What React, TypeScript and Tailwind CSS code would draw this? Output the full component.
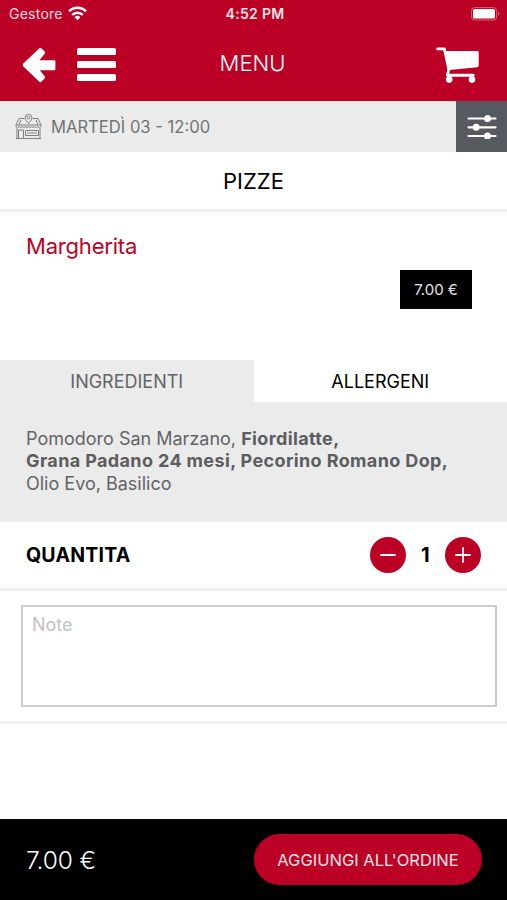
import { useState } from 'react'

function WifiIcon() {
  return (
    <svg width="19" height="15" viewBox="0 0 19 15" fill="none" stroke="#fff" strokeWidth="2.5">
      <path d="M1 5.4a12 12 0 0 1 17 0" />
      <path d="M4.2 8.9a7.5 7.5 0 0 1 10.6 0" />
      <path d="M9.5 14.2 6.6 11.2a4.1 4.1 0 0 1 5.8 0Z" fill="#fff" stroke="none" />
    </svg>
  )
}

function BatteryIcon() {
  return (
    <svg width="30" height="14" viewBox="0 0 30 14" fill="none">
      <rect x="0.6" y="0.6" width="25" height="12.4" rx="3" stroke="#dd6078" strokeWidth="1" />
      <rect x="2" y="2" width="22" height="9.6" rx="1.6" fill="#fff" />
      <path d="M27 4.6c1.9.7 1.9 3.7 0 4.4Z" fill="#dd6078" />
    </svg>
  )
}

function BackIcon() {
  return (
    <svg width="34" height="36" viewBox="0 0 34 36" fill="#fff" stroke="#fff" strokeWidth="2" strokeLinejoin="round">
      <path d="M18.3 1.7 2 17.2Q1.400 18 2 18.800L18.300 34.300 21.800 31V29.600L16.200 23V22.200H32.400V14.200H16.200V13L21.800 6.400V5Z" />
    </svg>
  )
}

function MenuIcon() {
  return (
    <svg width="39" height="33" viewBox="0 0 39 33" fill="#fff">
      <rect width="39" height="7" rx="1.6" />
      <rect y="13" width="39" height="7" rx="1.6" />
      <rect y="26" width="39" height="7" rx="1.6" />
    </svg>
  )
}

function CartIcon() {
  return (
    <svg width="43" height="36" viewBox="0 0 43 36" fill="none">
      <path d="M1.600 1.900h6.800l4.400 20.600-1.400 5.500" stroke="#fff" strokeWidth="2.800" strokeLinecap="round" strokeLinejoin="round" />
      <path d="M9.300 4h31.800q1.600 0 1.600 1.600v13q0 1.400-1.400 1.600L13.200 23.100Z" fill="#fff" />
      <path d="M11.800 28.300h25.400" stroke="#fff" strokeWidth="3" strokeLinecap="round" />
      <circle cx="13.200" cy="32.600" r="3.300" fill="#fff" />
      <circle cx="36" cy="32.600" r="3.300" fill="#fff" />
    </svg>
  )
}

function ShopIcon() {
  return (
    <svg width="27" height="27" viewBox="0 0 27 27" fill="none" stroke="#808080" strokeWidth="1">
      <path d="M9.5 5.500H4L1 12v1.600q1.500 2 3.200 0 1.500 2 3.100 0 1.600 2 3.100 0 1.600 2 3.100 0 1.600 2 3.100 0 1.600 2 3.100 0 1.600 2 3.100 0 1.600 2 3.200 0V12l-3-6.500h-5.500" />
      <path d="M1 12h25M2 15v10.500h23V15M1 25.500h25" />
      <path d="M3.500 25v-8h5v8M10.500 17.500h13v5h-13zM12 20h10M6 7l-2 5M21 7l2 5" />
      <path d="M13.500 10.500c-2-2.400-3.400-3.800-3.400-5.700a3.400 3.400 0 0 1 6.800 0c0 1.900-1.400 3.300-3.400 5.700Z" />
      <circle cx="13.500" cy="4.700" r="1.200" />
    </svg>
  )
}

function FilterIcon() {
  return (
    <svg width="30" height="24" viewBox="0 0 30 24" fill="#fff" stroke="#fff" strokeWidth="2.2" strokeLinecap="round">
      <path d="M1.500 3.500h27M1.500 12.300h27M1.500 21h27" />
      <circle cx="20.500" cy="3.500" r="2.400" />
      <circle cx="9.200" cy="12.300" r="2.400" />
      <circle cx="20.500" cy="21" r="2.400" />
    </svg>
  )
}

type RoundButtonProps = {
  label: string
  path: string
  onClick: () => void
}

function RoundButton({ label, path, onClick }: RoundButtonProps) {
  return (
    <button
      type="button"
      aria-label={label}
      onClick={onClick}
      className="flex size-9 items-center justify-center rounded-full bg-[#bc0025]"
    >
      <svg width="16" height="16" viewBox="0 0 16 16" stroke="#fff" strokeWidth="1.8" strokeLinecap="round">
        <path d={path} />
      </svg>
    </button>
  )
}

export default function App() {
  const [quantity, setQuantity] = useState(1)

  return (
    <div className="flex h-[900px] w-[507px] flex-col overflow-hidden bg-white font-['Inter',sans-serif] text-black">
      <header className="h-[101px] shrink-0 bg-[#bc0025] text-white">
        <div className="grid h-7 grid-cols-3 items-center pr-[6px] pl-[9px]">
          <div className="flex items-center gap-[5px] pb-[2px] text-[14px] tracking-[0.25px] text-white/85">
            Gestore
            <WifiIcon />
          </div>
          <div className="pb-[2px] text-center text-[14px] font-semibold tracking-[0.3px] text-white/90">4:52 PM</div>
          <div className="flex justify-end pb-px">
            <BatteryIcon />
          </div>
        </div>
        <div className="grid h-[73px] grid-cols-3 items-center pr-[28px] pl-[22px]">
          <div className="flex items-center gap-[21px]">
            <BackIcon />
            <MenuIcon />
          </div>
          <h1 className="pb-[2px] pl-1 text-center text-[22px] font-light">MENU</h1>
          <div className="flex justify-end">
            <CartIcon />
          </div>
        </div>
      </header>

      <div className="flex h-[51px] shrink-0 bg-[#ebebeb]">
        <div className="flex flex-1 items-center gap-[9px] pl-[15px] text-[16.6px] text-[#727272]">
          <ShopIcon />
          <span className="pt-[2px]">MARTEDÌ 03 - 12:00</span>
        </div>
        <button type="button" aria-label="Filtri" className="flex w-[51px] items-center justify-center bg-[#575960]">
          <FilterIcon />
        </button>
      </div>

      <h2 className="flex h-[60px] shrink-0 items-center justify-center border-b-3 border-[#eeeeee] pt-px text-[22px]">
        PIZZE
      </h2>

      <section className="flex h-[148px] shrink-0 flex-col pt-[18px] pr-[35px] pl-[26px]">
        <h3 className="text-[22px] leading-8 tracking-[-0.2px] text-[#bc0025]">Margherita</h3>
        <div className="mt-[8px] flex h-[39px] w-[72px] items-center justify-center self-end bg-black pt-px text-[15px] text-white/90">
          7.00 €
        </div>
      </section>

      <div className="grid h-[42px] shrink-0 grid-cols-2 text-[18px]">
        <button type="button" className="bg-[#ebebeb] text-[#636466]">INGREDIENTI</button>
        <button type="button">ALLERGENI</button>
      </div>
      <p className="h-[120px] shrink-0 bg-[#ebebeb] pt-[26px] pl-[26px] text-[18px] leading-[22.4px] text-[#636466]">
        Pomodoro San Marzano, <b className="font-bold tracking-[0.37px] text-[#5c5d5f]">Fiordilatte,</b>
        <br />
        <b className="font-bold tracking-[0.37px] text-[#5c5d5f]">Grana Padano 24 mesi, Pecorino Romano Dop,</b>
        <br />
        Olio Evo, Basilico
      </p>

      <div className="flex h-[69px] shrink-0 items-center border-b-3 border-[#eeeeee] pr-[26px] pl-[26px]">
        <span className="flex-1 pt-[2px] text-[19.5px] font-bold tracking-[0.2px]">QUANTITA</span>
        <RoundButton label="Meno" path="M1 8h14" onClick={() => setQuantity(Math.max(1, quantity - 1))} />
        <span className="w-[39.5px] text-center text-[20px] font-bold">{quantity}</span>
        <RoundButton label="Più" path="M1 8h14M8 1v14" onClick={() => setQuantity(quantity + 1)} />
      </div>

      <div className="h-[133px] shrink-0 border-b-3 border-[#f0f0f0] pt-[14px] pr-[10px] pl-[21px]">
        <textarea
          placeholder="Note"
          className="block h-[102px] w-full resize-none border-2 border-[#cccccc] px-[9px] py-[4px] text-[18px] placeholder:text-[#c2c2c2]"
        />
      </div>

      <footer className="mt-auto flex h-[81px] shrink-0 items-center justify-between bg-black pr-[25px] pl-[26px] text-white">
        <span className="pt-[2px] text-[24.5px] font-light tracking-[-0.1px]">7.00 €</span>
        <button type="button" className="h-[51px] w-[228px] rounded-full bg-[#bc0025] pt-px text-[16.5px] text-white/90">
          AGGIUNGI ALL'ORDINE
        </button>
      </footer>
    </div>
  )
}
